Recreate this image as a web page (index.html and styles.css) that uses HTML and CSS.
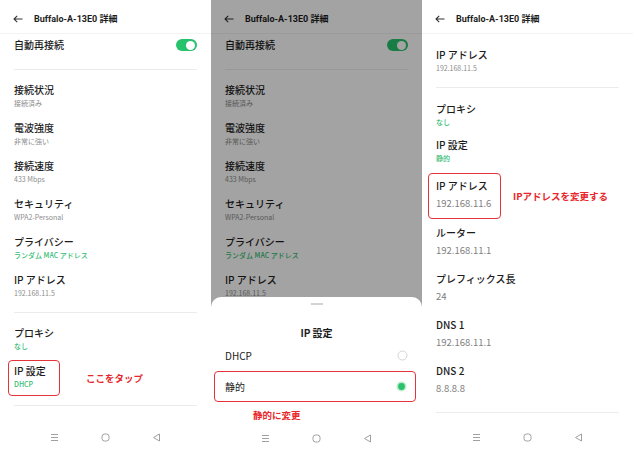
FILE: index.html
```html
<!DOCTYPE html>
<html lang="ja">
<head>
    <meta charset="UTF-8">
    <meta name="viewport" content="width=device-width, initial-scale=1.0">
    <title>IP 設定の変更手順</title>
    <link rel="stylesheet" href="styles.css">
</head>
<body>

<div class="screens">

    <!-- 1: 詳細画面 -->
    <section class="phone">
        <header class="bar">
            <svg class="back" width="10" height="8" viewBox="0 0 10 8"><path d="M9.5 4H1M4.2 0.8L1 4l3.2 3.2" fill="none" stroke="#333" stroke-width="1.1"/></svg>
            <span class="title">Buffalo-A-13E0 詳細</span>
        </header>
        <div class="body">
            <div class="auto">
                <span class="label">自動再接続</span>
                <span class="toggle"></span>
            </div>
            <hr>
            <div class="item first"><p class="label">接続状況</p><p class="sub">接続済み</p></div>
            <div class="item"><p class="label">電波強度</p><p class="sub">非常に強い</p></div>
            <div class="item"><p class="label">接続速度</p><p class="sub">433 Mbps</p></div>
            <div class="item"><p class="label">セキュリティ</p><p class="sub">WPA2-Personal</p></div>
            <div class="item"><p class="label">プライバシー</p><p class="sub green">ランダム MAC アドレス</p></div>
            <div class="item"><p class="label">IP アドレス</p><p class="sub">192.168.11.5</p></div>
            <hr class="sep-a">
            <div class="item first"><p class="label">プロキシ</p><p class="sub green">なし</p></div>
            <div class="mark-row tap-row">
                <div class="item marked tap"><p class="label">IP 設定</p><p class="sub green">DHCP</p></div>
                <span class="note tap-note">ここをタップ</span>
            </div>
            <hr class="sep-b">
        </div>
        <nav class="keys">
            <svg width="9" height="9" viewBox="0 0 9 9"><path d="M1 1.5h7M1 4.5h7M1 7.5h7" stroke="#a0a0a0" stroke-width="1"/></svg>
            <svg width="9" height="9" viewBox="0 0 9 9"><rect x="1" y="1" width="7" height="7" rx="2.5" fill="none" stroke="#a0a0a0" stroke-width="1"/></svg>
            <svg width="9" height="9" viewBox="0 0 9 9"><path d="M7.5 1L1.5 4.5 7.5 8z" fill="none" stroke="#a0a0a0" stroke-width="1" stroke-linejoin="round"/></svg>
        </nav>
    </section>

    <!-- 2: IP 設定シート -->
    <section class="phone dimmed">
        <header class="bar">
            <svg class="back" width="10" height="8" viewBox="0 0 10 8"><path d="M9.5 4H1M4.2 0.8L1 4l3.2 3.2" fill="none" stroke="#333" stroke-width="1.1"/></svg>
            <span class="title">Buffalo-A-13E0 詳細</span>
        </header>
        <div class="body">
            <div class="auto">
                <span class="label">自動再接続</span>
                <span class="toggle"></span>
            </div>
            <hr>
            <div class="item first"><p class="label">接続状況</p><p class="sub">接続済み</p></div>
            <div class="item"><p class="label">電波強度</p><p class="sub">非常に強い</p></div>
            <div class="item"><p class="label">接続速度</p><p class="sub">433 Mbps</p></div>
            <div class="item"><p class="label">セキュリティ</p><p class="sub">WPA2-Personal</p></div>
            <div class="item"><p class="label">プライバシー</p><p class="sub green">ランダム MAC アドレス</p></div>
            <div class="item"><p class="label">IP アドレス</p><p class="sub">192.168.11.5</p></div>
        </div>

        <div class="shade"></div>

        <div class="sheet">
            <div class="handle"></div>
            <p class="sheet-title">IP 設定</p>
            <div class="choice">
                <span>DHCP</span>
                <svg width="11" height="11" viewBox="0 0 11 11"><circle cx="5.5" cy="5.5" r="4.5" fill="#fff" stroke="#cfcfcf" stroke-width="0.9"/></svg>
            </div>
            <div class="choice picked">
                <span>静的</span>
                <svg width="11" height="11" viewBox="0 0 11 11"><circle cx="5.5" cy="5.5" r="5" fill="#bfeccf"/><circle cx="5.5" cy="5.5" r="3.4" fill="#2cc16c"/></svg>
            </div>
            <p class="note sheet-note">静的に変更</p>
            <nav class="keys">
                <svg width="9" height="9" viewBox="0 0 9 9"><path d="M1 1.5h7M1 4.5h7M1 7.5h7" stroke="#a0a0a0" stroke-width="1"/></svg>
                <svg width="9" height="9" viewBox="0 0 9 9"><rect x="1" y="1" width="7" height="7" rx="2.5" fill="none" stroke="#a0a0a0" stroke-width="1"/></svg>
                <svg width="9" height="9" viewBox="0 0 9 9"><path d="M7.5 1L1.5 4.5 7.5 8z" fill="none" stroke="#a0a0a0" stroke-width="1" stroke-linejoin="round"/></svg>
            </nav>
        </div>
    </section>

    <!-- 3: 静的 IP の入力 -->
    <section class="phone">
        <header class="bar">
            <svg class="back" width="10" height="8" viewBox="0 0 10 8"><path d="M9.5 4H1M4.2 0.8L1 4l3.2 3.2" fill="none" stroke="#333" stroke-width="1.1"/></svg>
            <span class="title">Buffalo-A-13E0 詳細</span>
        </header>
        <div class="body">
            <div class="item top"><p class="label">IP アドレス</p><p class="sub">192.168.11.5</p></div>
            <hr class="sep-c">
            <div class="item first"><p class="label">プロキシ</p><p class="sub green">なし</p></div>
            <div class="item mode"><p class="label">IP 設定</p><p class="sub green">静的</p></div>
            <div class="mark-row addr-row">
                <div class="field marked addr"><p class="label">IP アドレス</p><p class="value">192.168.11.6</p></div>
                <span class="note addr-note">IPアドレスを変更する</span>
            </div>
            <div class="field after-mark"><p class="label">ルーター</p><p class="value">192.168.11.1</p></div>
            <div class="field"><p class="label">プレフィックス長</p><p class="value">24</p></div>
            <div class="field"><p class="label">DNS 1</p><p class="value">192.168.11.1</p></div>
            <div class="field"><p class="label">DNS 2</p><p class="value">8.8.8.8</p></div>
            <hr class="sep-d">
        </div>
        <nav class="keys">
            <svg width="9" height="9" viewBox="0 0 9 9"><path d="M1 1.5h7M1 4.5h7M1 7.5h7" stroke="#a0a0a0" stroke-width="1"/></svg>
            <svg width="9" height="9" viewBox="0 0 9 9"><rect x="1" y="1" width="7" height="7" rx="2.5" fill="none" stroke="#a0a0a0" stroke-width="1"/></svg>
            <svg width="9" height="9" viewBox="0 0 9 9"><path d="M7.5 1L1.5 4.5 7.5 8z" fill="none" stroke="#a0a0a0" stroke-width="1" stroke-linejoin="round"/></svg>
        </nav>
    </section>

</div>

</body>
</html>
```

FILE: styles.css
```css
body {
    margin: 0;
    padding: 0;
    background-color: white;
    font-family: "Noto Sans CJK JP", "Noto Sans", sans-serif;
    color: #1c1c1c;
}

p {
    margin: 0;
}

.screens {
    display: flex;
    width: 633px;
    height: 450px;
}

.phone {
    position: relative;
    width: 211px;
    height: 450px;
    display: flex;
    flex-direction: column;
    overflow: hidden;
    background-color: white;
}

/* Header */
.bar {
    height: 29px;
    padding-top: 4px;
    display: flex;
    align-items: center;
    border-bottom: 1px solid #f3f3f3;
    flex-shrink: 0;
}

.back {
    margin-left: 13px;
    margin-right: 11px;
}

.title {
    font-family: Roboto, "Noto Sans CJK JP", sans-serif;
    font-size: 9px;
    font-weight: bold;
}

/* List */
.body {
    flex: 1;
    padding: 0 14px;
    overflow: hidden;
}

hr {
    margin: 0;
    border: 0;
    border-top: 1px solid #ececec;
}

.label {
    font-size: 10px;
    line-height: 14px;
    font-weight: 500;
    white-space: nowrap;
}

.sub {
    font-size: 7px;
    line-height: 12px;
    color: #8c8c8c;
    white-space: nowrap;
}

.green {
    color: #35bd76;
    font-weight: 500;
}

.auto {
    display: flex;
    justify-content: space-between;
    align-items: flex-start;
    padding: 4px 0 17px;
}

.toggle {
    position: relative;
    width: 21px;
    height: 12px;
    margin-top: 1px;
    border-radius: 6px;
    background-color: #27c26c;
}

.toggle::after {
    content: "";
    position: absolute;
    right: 2px;
    top: 1.5px;
    width: 9px;
    height: 9px;
    border-radius: 50%;
    background-color: white;
}

.item + .item {
    margin-top: 12px;
}

.item.first {
    margin-top: 13px;
}

.sep-a { margin-top: 13px; }
.sep-a + .item.first { margin-top: 13px; }
.sep-b { margin-top: 9px; }

/* Red markers */
.mark-row {
    display: flex;
    align-items: center;
}

.marked {
    border: 1.2px solid #e5333a;
    border-radius: 4px;
    box-sizing: border-box;
}

.tap-row {
    margin-top: 8px;
}

.tap {
    width: 52px;
    margin-left: -6px;
    padding: 3px 0 5px 5px;
}

.note {
    color: #e8262b;
    font-size: 9.5px;
    font-weight: bold;
    white-space: nowrap;
}

.tap-note {
    margin-left: 26px;
}

/* Panel 3 */
.item.top {
    margin-top: 14px;
}

.sep-c { margin-top: 13px; }
.sep-c + .item.first { margin-top: 14px; }

.item.mode {
    margin-top: 10px;
}

.addr-row {
    margin-top: 9px;
}

.addr {
    width: 73px;
    margin-left: -8px;
    padding: 5px 0 7px 7px;
}

.addr-note {
    margin-left: 12px;
}

.field .value {
    margin-top: 2px;
    font-size: 9.5px;
    line-height: 16px;
    color: #808080;
}

.field + .field {
    margin-top: 14px;
}

.field.after-mark {
    margin-top: 7px;
}

.sep-d {
    margin-top: 16px;
}

/* Bottom keys */
.keys {
    height: 26px;
    flex-shrink: 0;
    display: flex;
    justify-content: center;
    align-items: center;
    gap: 42px;
}

/* Panel 2: dim layer and sheet */
.shade {
    position: absolute;
    top: 0;
    left: 0;
    right: 0;
    bottom: 0;
    background-color: rgba(0, 0, 0, 0.36);
}

.sheet {
    position: absolute;
    left: 0;
    right: 0;
    bottom: 0;
    height: 153px;
    background-color: white;
    border-radius: 10px 10px 0 0;
    display: flex;
    flex-direction: column;
}

.handle {
    width: 12px;
    height: 1.5px;
    margin: 6px auto 0;
    background-color: #d3d3d3;
}

.sheet-title {
    margin-top: 21px;
    text-align: center;
    font-size: 10px;
    line-height: 14px;
    font-weight: bold;
}

.choice {
    height: 31px;
    display: flex;
    justify-content: space-between;
    align-items: center;
    padding: 0 14px;
    font-size: 10px;
}

.choice:first-of-type {
    margin-top: 7px;
}

.choice.picked {
    margin: 0 6px 0 3px;
    padding: 0 8px 0 10px;
    border: 1.2px solid #e5333a;
    border-radius: 4px;
    box-sizing: border-box;
}

.sheet-note {
    margin-top: 7px;
    padding-left: 42px;
    line-height: 12px;
}

.sheet .keys {
    height: 24px;
    margin-top: auto;
}
```
